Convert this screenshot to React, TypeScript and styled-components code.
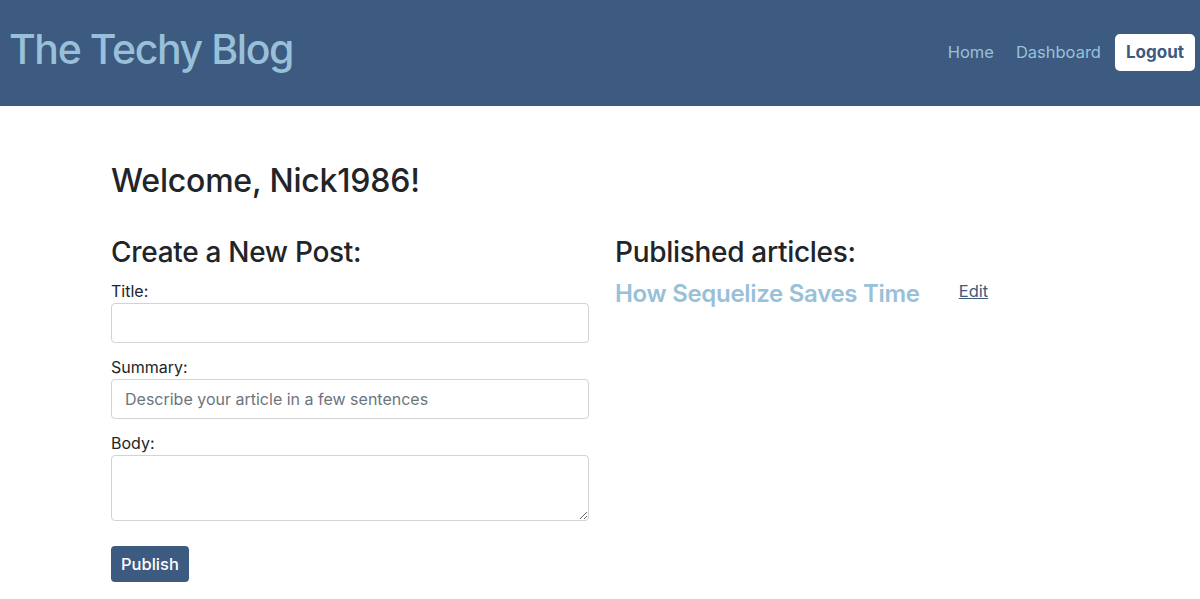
import React from "react";
import styled, { createGlobalStyle } from "styled-components";

const Global = createGlobalStyle`
  * { box-sizing: border-box; }
  body {
    margin: 0;
    font-family: Inter, "Liberation Sans", Arial, sans-serif;
    color: #212529;
    background: #fff;
    font-size: 16px;
  }
`;

const Header = styled.header`
  height: 106px;
  background: #3d5a80;
  display: flex;
  align-items: center;
  justify-content: space-between;
  padding: 0 5px 0 9px;
`;

const Brand = styled.h1`
  margin: 0;
  font-size: 41px;
  font-weight: 500;
  color: #98c1d9;
  letter-spacing: -1.4px;
  padding-bottom: 8px;
`;

const Nav = styled.nav`
  display: flex;
  align-items: center;
  gap: 22px;
  padding-bottom: 2px;
`;

const NavLink = styled.a`
  color: #98c1d9;
  font-size: 16.5px;
  text-decoration: none;
`;

const LogoutButton = styled.button`
  background: #fff;
  color: #3d5a80;
  border: none;
  border-radius: 5px;
  font-family: inherit;
  font-weight: 700;
  font-size: 17px;
  height: 37px;
  padding: 0 11px;
  margin-left: -8px;
`;

const Main = styled.main`
  padding: 56px 0 0 111px;
`;

const Welcome = styled.h2`
  margin: 0 0 35px;
  font-size: 32px;
  font-weight: 500;
  line-height: 38px;
  letter-spacing: -0.2px;
`;

const Columns = styled.div`
  display: grid;
  grid-template-columns: 478px 1fr;
  column-gap: 26px;
`;

const SectionTitle = styled.h3`
  margin: 0 0 10px;
  font-size: 28px;
  font-weight: 500;
  line-height: 34px;
  letter-spacing: -0.3px;
`;

const Form = styled.form`
  display: flex;
  flex-direction: column;
`;

const Label = styled.label`
  font-size: 16px;
  line-height: 24px;
`;

const Input = styled.input`
  width: 100%;
  height: 40px;
  border: 1px solid #ced4da;
  border-radius: 4px;
  padding: 6px 13px;
  font-family: inherit;
  font-size: 16px;
  color: #495057;
  margin-bottom: 12px;
  &::placeholder { color: #6c757d; }
`;

const TextArea = styled.textarea`
  width: 100%;
  height: 66px;
  border: 1px solid #ced4da;
  border-radius: 4px;
  padding: 6px 13px;
  font-family: inherit;
  font-size: 16px;
  resize: vertical;
`;

const PublishButton = styled.button`
  align-self: flex-start;
  margin-top: 25px;
  background: #3d5a80;
  color: #fff;
  border: none;
  border-radius: 4px;
  height: 36px;
  padding: 0 10px;
  font-family: inherit;
  font-size: 16.5px;
  font-weight: 500;
`;

const ArticleRow = styled.div`
  display: flex;
  align-items: baseline;
  gap: 39px;
`;

const ArticleTitle = styled.a`
  font-size: 24px;
  font-weight: 600;
  color: #98c1d9;
  text-decoration: none;
  letter-spacing: -0.3px;
`;

const EditLink = styled.a`
  color: #3d5a80;
  font-size: 16.5px;
  text-decoration: underline;
  position: relative;
  top: -5px;
`;

export default function App() {
  return (
    <>
      <Global />
      <Header>
        <Brand>The Techy Blog</Brand>
        <Nav>
          <NavLink href="#">Home</NavLink>
          <NavLink href="#">Dashboard</NavLink>
          <LogoutButton>Logout</LogoutButton>
        </Nav>
      </Header>
      <Main>
        <Welcome>Welcome, Nick1986!</Welcome>
        <Columns>
          <div>
            <SectionTitle>Create a New Post:</SectionTitle>
            <Form onSubmit={(e) => e.preventDefault()}>
              <Label htmlFor="title">Title:</Label>
              <Input id="title" />
              <Label htmlFor="summary">Summary:</Label>
              <Input id="summary" placeholder="Describe your article in a few sentences" />
              <Label htmlFor="body">Body:</Label>
              <TextArea id="body" />
              <PublishButton type="submit">Publish</PublishButton>
            </Form>
          </div>
          <div>
            <SectionTitle>Published articles:</SectionTitle>
            <ArticleRow>
              <ArticleTitle href="#">How Sequelize Saves Time</ArticleTitle>
              <EditLink href="#">Edit</EditLink>
            </ArticleRow>
          </div>
        </Columns>
      </Main>
    </>
  );
}
